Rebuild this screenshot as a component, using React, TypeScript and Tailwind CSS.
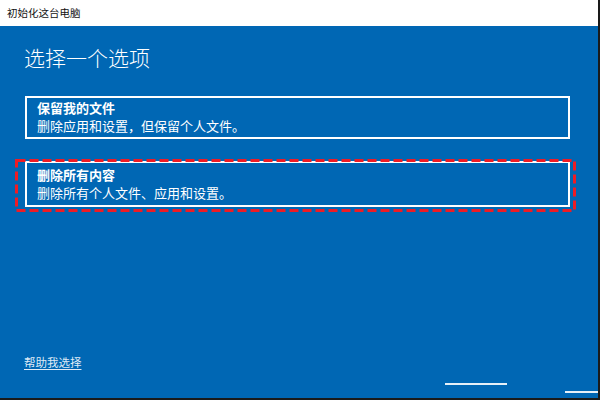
import React from 'react';

const FONT = { fontFamily: '"Noto Sans CJK SC", "Microsoft YaHei", sans-serif' };

interface Option {
    title: string;
    desc: string;
}

const options: Option[] = [
    { title: '保留我的文件', desc: '删除应用和设置，但保留个人文件。' },
    { title: '删除所有内容', desc: '删除所有个人文件、应用和设置。' },
];

function OptionBox({ option, pad }: { option: Option; pad: string }) {
    return (
        <div className={`w-[545px] border-2 border-white pl-[10px] leading-[18px] text-white ${pad}`}>
            <div className="text-[13px] font-bold">{option.title}</div>
            <div className="text-[13px]">{option.desc}</div>
        </div>
    );
}

export default function App() {
    return (
        <div className="w-[600px] h-[400px] flex flex-col border-r-2 border-b-2 border-[#1a1a1a] overflow-hidden" style={FONT}>
            {/* 标题栏 */}
            <div className="h-[26px] shrink-0 bg-white flex items-center pl-[7px] text-[10.5px] text-[#111]">
                初始化这台电脑
            </div>

            <div className="relative flex-1 bg-[#0067b4] flex flex-col pl-[25px] pt-[17px]">
                <h1 className="text-[21px] leading-[28px] font-light text-white -ml-[1px]">选择一个选项</h1>

                <div className="mt-[25px]">
                    <OptionBox option={options[0]} pad="pt-[1px] pb-[2px]" />
                </div>

                <div className="relative mt-[22px]">
                    <OptionBox option={options[1]} pad="pt-[3px] pb-[3px]" />
                    {/* 红色虚线标注 */}
                    <svg className="absolute left-[-10px] top-[-2px] pointer-events-none" width="561" height="53">
                        <rect x="1.5" y="1.5" width="558" height="50" fill="none" stroke="#ee1c25" strokeWidth="3" strokeDasharray="9 4" />
                    </svg>
                </div>

                <div className="mt-auto mb-[26px]">
                    <span className="text-[11.5px] leading-[16px] text-[#dfeaf6] underline underline-offset-2 -ml-[1px]">帮助我选择</span>
                </div>

                <div className="absolute left-[445px] top-[357px] w-[62px] h-[2px] bg-white/90" />
                <div className="absolute left-[565px] top-[365px] w-[35px] h-[2px] bg-white/90" />
            </div>
        </div>
    );
}
